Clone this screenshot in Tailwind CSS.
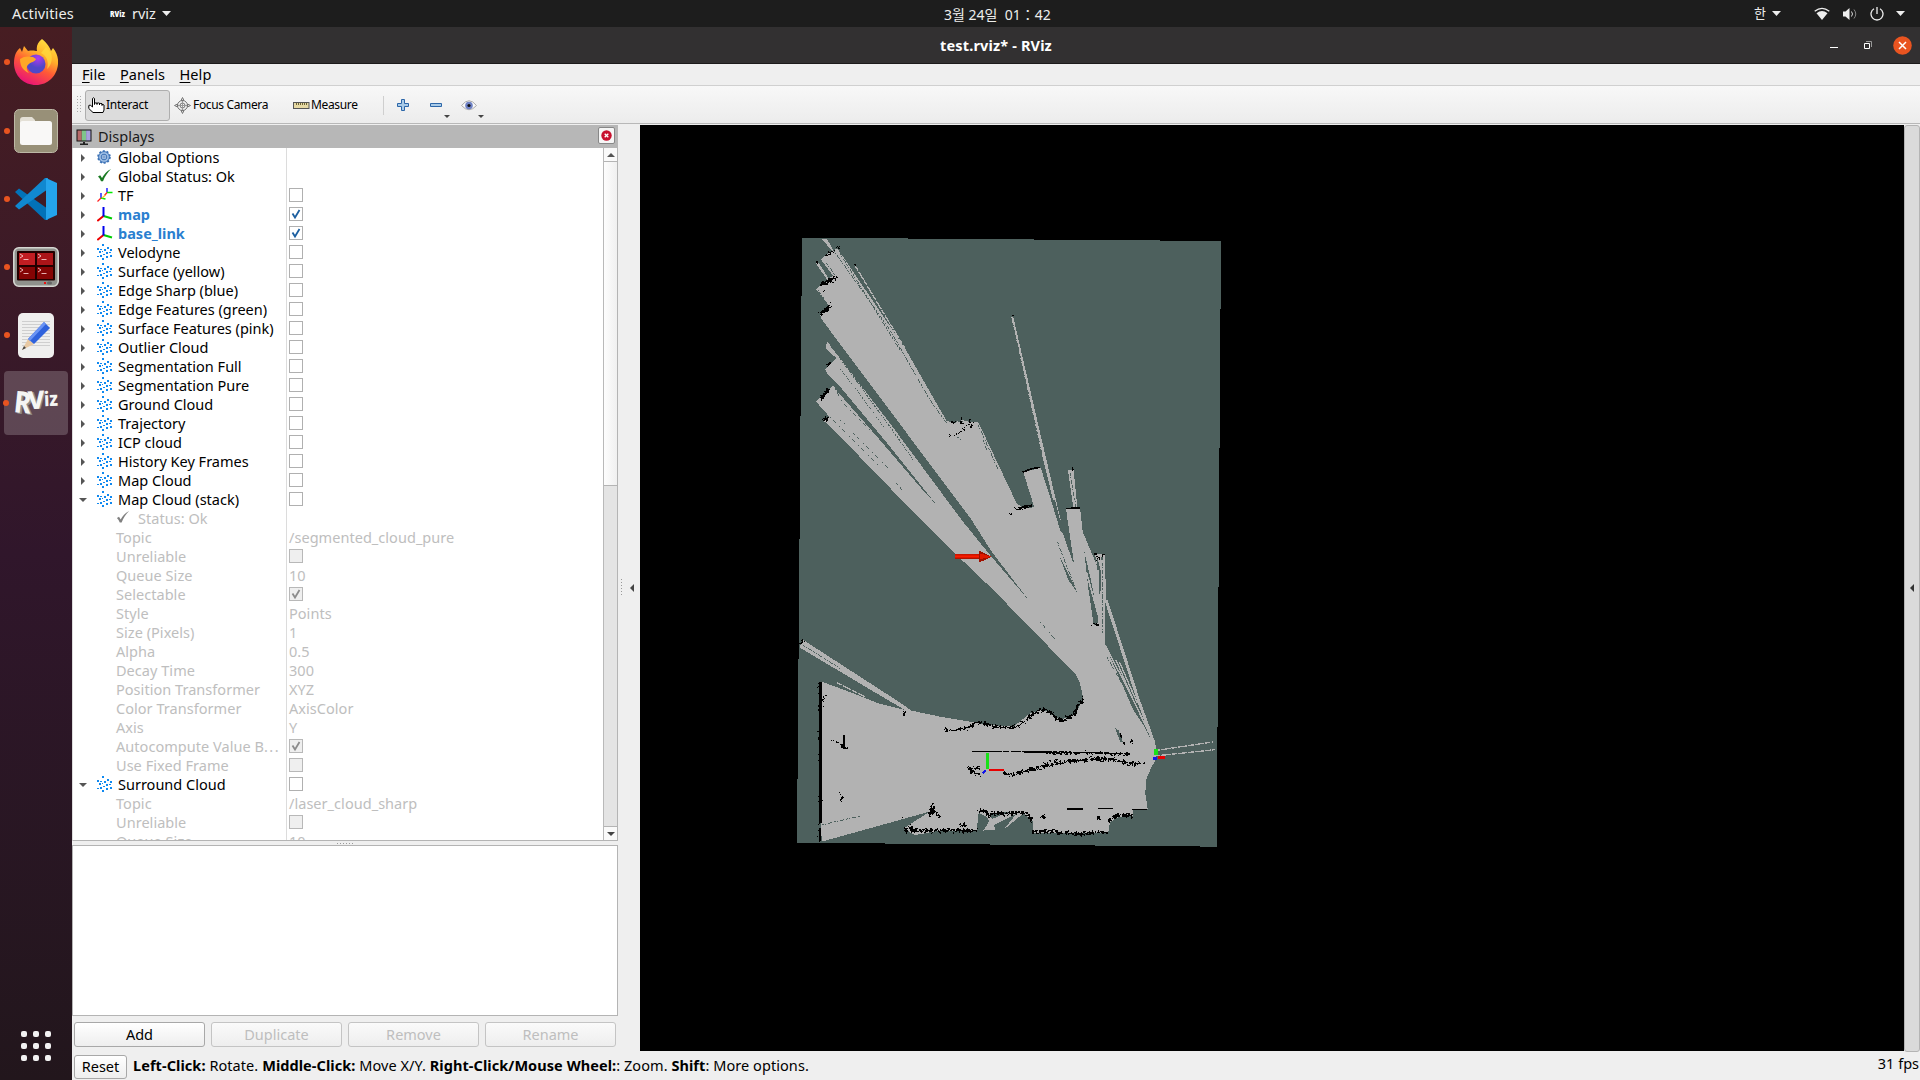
<!DOCTYPE html>
<html lang="en">
<head>
<meta charset="utf-8">
<title>test.rviz* - RViz</title>
<script src="https://cdn.jsdelivr.net/npm/@tailwindcss/browser@4"></script>
</head>
<body class="w-[1920px] h-[1080px] overflow-hidden flex flex-col bg-[#efefef] font-['Noto_Sans','Noto_Sans_CJK_KR',sans-serif] text-[14.5px] text-black">
<svg class="hidden">
  <symbol id="cloud" viewBox="0 0 16 16"><path fill="#1089f0" shape-rendering="crispEdges" d="M5 0h2v2H5zM10 3h2v2h-2zM0 4h2v2H0zM3 5h2v1H3zM7 5h2v2H7zM13 5h2v2h-2zM2 7h2v2H2zM5 7h1v1H5zM9 8h2v2H9zM12 8h2v1h-2zM3 11h2v2H3zM6 10h2v1H6zM0 12h2v1H0zM9 12h2v2H9zM13 11h2v2h-2zM5 14h2v2H5z"/></symbol>
  <symbol id="gear" viewBox="0 0 16 16"><circle cx="7" cy="8" r="5.400" fill="#9dbde4" stroke="#3f75b8" stroke-width="1"/><circle cx="7" cy="8" r="6" fill="none" stroke="#3a70b5" stroke-width="1.600" stroke-dasharray="2 1.770"/><circle cx="7" cy="8" r="2.800" fill="#b8d0ee" stroke="#2f66ad" stroke-width=".9"/><circle cx="7" cy="8" r="1.100" fill="#eef4fc" stroke="#2f66ad" stroke-width=".7"/></symbol>
  <symbol id="check" viewBox="0 0 16 16"><path d="M1 8.500 L3.200 7.200 L5 10 C7 6.500 9.500 3.200 14 1 C10.500 4.500 7.800 8.500 6 13.200 L4 13.200 C3.300 11.300 2.300 9.700 1 8.500z"/></symbol>
  <symbol id="tf" viewBox="0 0 16 16"><g fill="none" stroke-width="1.300"><path stroke="#00f" d="M10 1V5.500M4 6v5"/><path stroke="#0e0" d="M10 5.500h5.500M4 11l4.500 1"/><path stroke="#f22" d="M10 5.500l-2.500 3M4 11L.5 14.500"/><path stroke="#fb3" d="M8.500 8l-3.500 3"/></g></symbol>
  <symbol id="axes" viewBox="0 0 16 16"><g fill="none" stroke-width="2"><path stroke="#0c0" d="M6.500 10l8.500 2.500"/><path stroke="#e00" d="M6.500 10L.3 15"/><path stroke="#00e" d="M6.500 10.500V1"/></g></symbol>
</svg>

<header class="h-[27px] shrink-0 bg-[#1d1d1d] text-[#eeeeec] flex items-center">
  <div class="w-[940px] flex items-center pl-3">
    <span class="w-[98px] tracking-[0.150px]">Activities</span>
    <svg class="w-[15px] h-[14px] overflow-visible" viewBox="0 0 15 14"><text x="0" y="10" font-size="9.500" font-weight="900" fill="#fff" textLength="15" lengthAdjust="spacingAndGlyphs" font-family="Noto Sans">RViz</text></svg>
    <span class="ml-[7px]">rviz</span>
    <svg class="ml-[6px] w-[9px] h-[5px]" viewBox="0 0 9 5"><path fill="#eee" d="M0 0h9L4.500 5z"/></svg>
  </div>
  <div class="w-[120px] ml-[4px] whitespace-pre text-[14px] pt-[2px]">3월 24일  01：42</div>
  <div class="flex-1 flex items-center justify-end pr-[15px]">
    <span class="text-[13px] pt-px">한</span>
    <svg class="ml-[6px] w-[9px] h-[5px]" viewBox="0 0 9 5"><path fill="#eee" d="M0 0h9L4.500 5z"/></svg>
    <svg class="ml-[33px] w-4 h-3.5" viewBox="0 0 16 14"><path fill="#eee" d="M8 13L2.500 6.200Q8 2 13.500 6.200z"/><path fill="none" stroke="#eee" stroke-width="1.300" d="M.7 4.300Q8 -1.600 15.300 4.300"/></svg>
    <svg class="ml-[12px] w-4 h-3.5" viewBox="0 0 16 14"><path fill="#eee" d="M1 4.500h2.500L7.500 1v12L3.500 9.500H1z"/><path fill="none" stroke="#ddd" d="M9.500 4.500q2 2.500 0 5"/><path fill="none" stroke="#888" d="M12 2.500q3.500 4.500 0 9"/></svg>
    <svg class="ml-[12px] w-3.5 h-3.5" viewBox="0 0 14 14"><path fill="none" stroke="#eee" stroke-width="1.300" d="M7 0v7M4 1.800a6 6 0 1 0 6 0"/></svg>
    <svg class="ml-[12px] w-[9px] h-[5px]" viewBox="0 0 9 5"><path fill="#eee" d="M0 0h9L4.500 5z"/></svg>
  </div>
</header>

<div class="flex flex-1 min-h-0">
  <nav class="w-[72px] shrink-0 flex flex-col bg-linear-to-b from-[#471d22] via-[#30162b] to-[#22161c]">
    <div class="h-[70px] flex items-center">
      <i class="w-1.5 h-1.5 rounded-full bg-[#e95420] ml-1"></i>
      <svg class="ml-1 w-11 h-[46px]" viewBox="0 0 44 46">
        <defs><linearGradient id="ff" x1=".8" y1="0" x2=".3" y2="1"><stop offset="0" stop-color="#ffe843"/><stop offset=".35" stop-color="#ffb02a"/><stop offset=".6" stop-color="#ff5b35"/><stop offset="1" stop-color="#e8107a"/></linearGradient><radialGradient id="fp" cx=".6" cy=".2"><stop offset="0" stop-color="#b03af0"/><stop offset="1" stop-color="#5048c8"/></radialGradient></defs>
        <path fill="url(#ff)" d="M28 0C34 5 36 9 37 12L39 9C43 14 44.500 19 44 25C43 37 34 46 22 46C10 46 0 37 0 24C0 17 2 12 6 9L8 13L10 7L14 12C19 11 21 12 23 12C22 7 24 3 28 0z"/>
        <circle cx="22" cy="25" r="9.500" fill="url(#fp)"/>
        <path fill="#ffa727" d="M6 20C10 17 14 17 19 18L22 20C21 23 17 23 15 25C12 27 12 31 15 34C10 32 6 28 6 20z"/>
        <path fill="#ffdc3e" d="M27 14c6 3 8 9 6 16c4-3 6-10 4-16l-5-6z" opacity=".7"/>
      </svg>
    </div>
    <div class="h-[68px] flex items-center">
      <i class="w-1.5 h-1.5 rounded-full bg-[#e95420] ml-1"></i>
      <svg class="ml-1 w-11 h-11" viewBox="0 0 44 44"><rect x=".5" y=".5" width="43" height="43" rx="5" fill="#989078" stroke="#bdb8a6"/><path fill="#e4e0d6" d="M6 11a3 3 0 0 1 3-3h9l3 3v7H6z"/><rect x="6" y="12" width="32" height="24" rx="2.500" fill="#f9f8f7"/></svg>
    </div>
    <div class="h-[68px] flex items-center">
      <i class="w-1.5 h-1.5 rounded-full bg-[#e95420] ml-1"></i>
      <svg class="ml-[5px] w-[42px] h-[42px]" viewBox="0 0 42 42"><path fill="#0272b8" d="M0 14L4 10.500L33 31V42L30 42z"/><path fill="#1088d0" d="M0 28L4 31.500L33 11V0H30z"/><path fill="#24a4ec" d="M31 0L42 5V37L31 42z"/></svg>
    </div>
    <div class="h-[68px] flex items-center">
      <i class="w-1.5 h-1.5 rounded-full bg-[#e95420] ml-1"></i>
      <svg class="ml-[3px] w-[46px] h-10" viewBox="0 0 46 40"><rect x=".8" y=".8" width="44.400" height="38.400" rx="5" fill="#8f918c" stroke="#d5d7d2" stroke-width="1.600"/><rect x="4" y="4" width="38" height="29.500" rx="1" fill="#200"/><rect x="6" y="6" width="16" height="12" fill="#c11d22"/><rect x="24" y="6" width="16" height="12" fill="#ab1418"/><rect x="6" y="20" width="16" height="12" fill="#850404"/><rect x="24" y="20" width="16" height="12" fill="#850404"/><path stroke="#fdd" stroke-width=".8" fill="none" d="M7 7l3 2-3 2M10.500 12.500h5M25 7l3 2-3 2M28.500 12.500h5M7 21l3 2-3 2M10.500 26.500h5M25 21l3 2-3 2M28.500 26.500h5"/><path fill="#e11" d="M31 35h2v2h-2z"/><rect x="34" y="34.500" width="5" height="3" rx="1.500" fill="#666"/></svg>
    </div>
    <div class="h-[68px] flex items-center">
      <i class="w-1.5 h-1.5 rounded-full bg-[#e95420] ml-1"></i>
      <svg class="ml-2 w-9 h-[45px]" viewBox="0 0 36 45"><rect width="36" height="45" rx="5" fill="#efefee"/><path stroke="#cfcfcf" d="M4 8.500h28M4 11.500h28M4 14.500h28M4 17.500h28M4 20.500h28M4 23.500h28M4 26.500h28M4 29.500h28M4 32.500h28"/><path fill="#e8c9a4" d="M4 37L10 26L16 31z"/><path fill="#444" d="M4 37l2-4 2 2z"/><path fill="#2f62dc" d="M10 26L26 9L32 15L16 31z"/><path fill="#6a94f4" d="M10 26L26 9L28 11L12 28z"/></svg>
    </div>
    <div class="h-[68px] flex items-center">
      <div class="ml-1 w-16 h-16 rounded bg-white/20 flex items-center">
        <i class="w-1.5 h-1.5 rounded-full bg-[#e95420] -ml-px"></i>
        <svg class="ml-[5px] w-[46px] h-[34px] overflow-visible" viewBox="0 0 46 34" font-family="Noto Sans" font-weight="800"><g fill="#8c8a86"><text x="2" y="28" font-size="30" textLength="17" lengthAdjust="spacingAndGlyphs" transform="rotate(6 9 20)">R</text><text x="16" y="23" font-size="24" transform="rotate(-3 20 20)">V</text></g><g fill="#f5f5f3"><text x="0" y="27" font-size="30" textLength="17" lengthAdjust="spacingAndGlyphs" transform="rotate(6 9 20)">R</text><text x="14" y="23" font-size="25" transform="rotate(-3 20 20)">V</text><text x="30" y="20" font-size="20" textLength="14" lengthAdjust="spacingAndGlyphs" transform="rotate(-2 36 14)">iz</text></g></svg>
      </div>
    </div>
    <div class="mt-auto mb-[19px] mx-auto grid grid-cols-3 gap-[6px]">
      <i class="w-1.5 h-1.5 rounded-[2px] bg-[#f2f2f2]"></i><i class="w-1.5 h-1.5 rounded-[2px] bg-[#f2f2f2]"></i><i class="w-1.5 h-1.5 rounded-[2px] bg-[#f2f2f2]"></i>
      <i class="w-1.5 h-1.5 rounded-[2px] bg-[#f2f2f2]"></i><i class="w-1.5 h-1.5 rounded-[2px] bg-[#f2f2f2]"></i><i class="w-1.5 h-1.5 rounded-[2px] bg-[#f2f2f2]"></i>
      <i class="w-1.5 h-1.5 rounded-[2px] bg-[#f2f2f2]"></i><i class="w-1.5 h-1.5 rounded-[2px] bg-[#f2f2f2]"></i><i class="w-1.5 h-1.5 rounded-[2px] bg-[#f2f2f2]"></i>
    </div>
  </nav>

  <main class="flex-1 min-w-0 flex flex-col">
    <div class="h-[37px] shrink-0 bg-[#323031] border-b border-[#1c1b1b] flex items-center text-white">
      <b class="w-[1848px] text-center tracking-[0.150px] pt-px">test.rviz* - RViz</b>
      <div class="-ml-[104px] w-[104px] flex items-center justify-end pr-[8px]">
        <svg class="w-2 h-3" viewBox="0 0 8 12"><path fill="#fff" d="M0 8h8v1H0z"/></svg>
        <svg class="ml-[26px] w-2 h-2.5" viewBox="0 0 8 10"><path fill="none" stroke="#999" d="M2 1.500h5.500V7"/><path fill="none" stroke="#fff" d="M.5 3.500h5v5h-5z"/></svg>
        <svg class="ml-[21px] w-[19px] h-[19px]" viewBox="0 0 19 19"><circle cx="9.500" cy="9.500" r="9.300" fill="#e95420"/><path stroke="#fff" stroke-width="1.500" d="M6 6l7 7M13 6l-7 7"/></svg>
      </div>
    </div>
    <div class="h-[22px] shrink-0 border-b border-[#d0d0d0] flex items-center pl-[10px] gap-[14.5px] tracking-[0.060px]">
      <span><u class="underline-offset-2">F</u>ile</span><span><u class="underline-offset-2">P</u>anels</span><span><u class="underline-offset-2">H</u>elp</span>
    </div>
    <div class="h-[38px] shrink-0 border-b border-[#b8b8b8] bg-linear-to-b from-[#f8f8f8] to-[#ececec] flex items-center text-[12px] tracking-[-0.350px] pt-px">
      <svg class="ml-[5px] w-[5px] h-[18px]" viewBox="0 0 5 18"><path stroke="#aaa" stroke-dasharray="1 2" d="M.5 0v18M3.500 0v18"/></svg>
      <div class="ml-[3px] w-[85px] h-[31px] rounded-[3px] border border-[#aeaeae] bg-[#dcdcdc] flex items-center pl-[2px]">
        <svg class="w-[17px] h-[17px]" viewBox="0 0 17 17"><path fill="#fff" stroke="#000" stroke-width="1" d="M4.500 10V1.500q1-1.500 2 0V7.500V6.200q1.500-.6 2.500 0V7.500V6.200q1.500-.6 2.500 0V8V6.700q1.500-.6 2.500 0V8.500V7.500q1.500-.2 2 .5V13l-1 2.500H5L.8 11.500V8.500q1.500-.8 2 0z"/></svg>
        <span class="ml-[1px] tracking-[-0.250px]">Interact</span>
      </div>
      <svg class="ml-[4px] w-[17px] h-[17px]" viewBox="0 0 17 17"><g fill="none" stroke="#777"><circle cx="8.500" cy="8.500" r="5"/><circle cx="8.500" cy="8.500" r="2.500"/><path stroke="#999" d="M8.500 3v11M3 8.500h11"/><path fill="#ddd" d="M8.500.5l1.500 3H7zM8.500 16.500l1.500-3H7zM.5 8.500l3-1.500v3zM16.500 8.500l-3-1.500v3z"/></g></svg>
      <span class="ml-[2px] w-[100px]">Focus Camera</span>
      <svg class="w-[17px] h-[7px]" viewBox="0 0 17 7"><rect x=".5" y=".5" width="15.500" height="6" fill="#e6d9a4" stroke="#555"/><path stroke="#6b6235" d="M3.500 1v2M5.500 1v2M7.500 1v2M9.500 1v2M11.500 1v2M13.500 1v2"/></svg>
      <span class="ml-[1px] w-[72px]">Measure</span>
      <i class="w-px h-[19px] bg-[#cfcfcf]"></i>
      <svg class="ml-[13px] w-3 h-3" viewBox="0 0 12 12"><path fill="#a9cbe8" stroke="#2c66a8" d="M4.500.5h3v4h4v3h-4v4h-3v-4h-4v-3h4z"/></svg>
      <svg class="ml-[21px] w-3 h-1" viewBox="0 0 12 4"><path fill="#a9cbe8" stroke="#2c66a8" d="M.5.5h11v3H.5z"/></svg>
      <svg class="ml-[2px] mt-[22px] w-[6px] h-[3px]" viewBox="0 0 6 3"><path fill="#444" d="M0 0h6L3 3z"/></svg>
      <svg class="ml-[11px] w-4 h-[11px]" viewBox="0 0 16 11"><path fill="#fafafa" stroke="#aaa" d="M.5 5.500Q8-4 15.500 5.500Q8 14 .5 5.500z"/><circle cx="8" cy="5.500" r="3.800" fill="#6f82c4"/><circle cx="8" cy="5.500" r="1.600" fill="#111"/></svg>
      <svg class="ml-px mt-[22px] w-[6px] h-[3px]" viewBox="0 0 6 3"><path fill="#444" d="M0 0h6L3 3z"/></svg>
    </div>

    <div class="flex h-[928px] shrink-0 pt-px">
      <section class="w-[546px] shrink-0 flex flex-col">
        <div class="h-[23px] shrink-0 bg-[#b7b7b7] flex items-center pl-1 pr-[3px] text-[#1a1a1a]">
          <svg class="w-4 h-4" viewBox="0 0 16 16"><rect x=".5" y=".5" width="15" height="12" fill="#111" /><path fill="#b86a6a" d="M1.500 1.500h4.300v10H1.500z"/><path fill="#7fc58a" d="M5.800 1.500h4.300v10H5.800z"/><path fill="#a8a0dc" d="M10.100 1.500h4.400v10h-4.400z"/><path fill="#222" d="M7 13h2v1.500h3V16H4v-1.500h3z"/></svg>
          <span class="ml-[6px]">Displays</span>
          <span class="ml-auto w-[17px] h-[17px] mb-[3px] rounded-[2px] border border-[#888] bg-[#f6f6f6] flex items-center justify-center"><svg class="w-[11px] h-[11px]" viewBox="0 0 11 11"><circle cx="5.500" cy="5.500" r="5.200" fill="#c8102e"/><path stroke="#fff" stroke-width="1.300" d="M3.700 3.700l3.600 3.600M7.300 3.700l-3.600 3.600"/></svg></span>
        </div>
        <div class="h-[693px] shrink-0 flex bg-white border-b border-r border-l border-[#b4b4b4] border-l-[#ddd] overflow-hidden">
          <div id="tree" class="flex-1 h-[692px] overflow-hidden"></div>
          <div class="w-[14px] border-l border-[#b9b9b9] bg-[#e4e4e4] flex flex-col">
            <span class="h-[14px] bg-[#fafafa] border-b border-[#b4b4b4] flex items-center justify-center"><svg class="w-2 h-1" viewBox="0 0 8 4"><path fill="#555" d="M0 4L4 0l4 4z"/></svg></span>
            <span class="h-[324px] bg-linear-to-r from-[#fdfdfd] to-[#f0f0f0] border-b border-[#b4b4b4]"></span>
            <span class="mt-auto h-[14px] bg-[#fafafa] border-t border-[#b4b4b4] flex items-center justify-center"><svg class="w-2 h-1" viewBox="0 0 8 4"><path fill="#444" d="M0 0h8L4 4z"/></svg></span>
          </div>
        </div>
        <div class="h-1 flex items-center justify-center"><svg class="w-[17px] h-px" viewBox="0 0 17 1"><path stroke="#999" stroke-dasharray="1 2" d="M0 .5h17"/></svg></div>
        <div class="h-[171px] shrink-0 bg-white border border-[#b4b4b4]"></div>
        <div class="flex gap-[6px] pt-[6px] px-[2px] text-[#bebebe]">
          <button class="w-[131px] h-[25px] rounded-[3px] border border-[#a8a8a8] bg-linear-to-b from-white to-[#eeeeee] text-black">Add</button>
          <button class="w-[131px] h-[25px] rounded-[3px] border border-[#c4c4c4] bg-linear-to-b from-[#fafafa] to-[#eeeeee]">Duplicate</button>
          <button class="w-[131px] h-[25px] rounded-[3px] border border-[#c4c4c4] bg-linear-to-b from-[#fafafa] to-[#eeeeee]">Remove</button>
          <button class="w-[131px] h-[25px] rounded-[3px] border border-[#c4c4c4] bg-linear-to-b from-[#fafafa] to-[#eeeeee]">Rename</button>
        </div>
      </section>
      <div class="w-[22px] shrink-0 flex items-center pl-[3px] pb-[2px]">
        <svg class="w-px h-[17px]" viewBox="0 0 1 17"><path stroke="#999" stroke-dasharray="1 2" d="M.5 0v17"/></svg>
        <svg class="ml-[8px] w-1 h-2" viewBox="0 0 4 8"><path fill="#444" d="M4 0v8L0 4z"/></svg>
      </div>
      <svg class="w-[1264px] h-[926px] shrink-0 bg-black" viewBox="640 125 1264 926" shape-rendering="crispEdges">
        <defs>
          <filter id="rough" x="-.1" y="-.1" width="1.200" height="1.200"><feTurbulence type="fractalNoise" baseFrequency=".13" numOctaves="2" seed="4"/><feDisplacementMap in="SourceGraphic" scale="20" xChannelSelector="R" yChannelSelector="G"/></filter>
          <linearGradient id="shaft" x1="0" y1="0" x2="0" y2="1"><stop offset="0" stop-color="#c01400"/><stop offset=".5" stop-color="#ff1c00"/><stop offset="1" stop-color="#8a0e00"/></linearGradient>
        </defs>
        <g transform="translate(790 220) scale(.333333)">
          <path fill="#4d605d" d="M36 53L1293 63L1280 1880L21 1868z"/>
          <!-- free space -->
          <g fill="#b2b2b2">
            <path d="M97 58L112 58L130 92L142 85L345 385L470 603L490 608L518 600L545 607L565 607L680 850L700 865L733 862L700 757L752 743L790 862L815 930L850 1030L828 865L870 862L878 935L920 1035L915 1000L945 1005L948 1140L1000 1310L1047 1440L1098 1580L1096 1622L1085 1640L1068 1680L1066 1720L1073 1768L1030 1768V1788L985 1792L960 1806L955 1838H730V1805L700 1780L640 1776L600 1780L616 1830L580 1830L600 1810L590 1790L566 1778L560 1832H450L375 1845L340 1826L415 1776L95 1865L90 1690L95 1385L190 1420L265 1450L345 1470L290 1438L95 1322L28 1282L40 1260L315 1438L365 1472L450 1490L540 1505L600 1515L670 1520L720 1480L760 1468L810 1500L855 1485L880 1435L870 1390L855 1360L815 1320L610 1110L500 1005L335 840L110 608L100 603L118 590L78 545L130 495L105 448L140 415L106 385L112 365L300 610L515 900L600 1005L718 1143L605 995L545 900L95 298L90 285L118 258L78 207L112 180L76 128L84 126L116 175L130 168L92 118L125 92z"/>
            <path d="M834 750L851 750L862 862L850 862z"/>
            <path d="M664 292L670 292L760 680L812 900L804 900L750 680z"/>
            <path d="M692 1774L580 1832L600 1800L650 1778zM700 1780L640 1830L680 1780z"/>
          </g>
          <!-- unknown gaps between rays -->
          <g fill="#4d605d">
            <path d="M105 455L150 500L300 680L440 855L400 812L280 672L140 512z"/>
            <path d="M783 840L795 840L822 945L812 935zM804 840L828 868L852 1030L846 1010L826 925z"/>
            <path d="M883 995L905 1090L925 1190L922 1215H911L895 1105zM921 1010L934 1060L931 1125L925 1120zM934 1010L938 1010L936 1090z"/>
            <path d="M945 1160L948 1140L1060 1480L1090 1560L1030 1470L945 1275z"/>
            <path d="M976 1525L985 1530L1000 1568L990 1565zM805 1000L830 1050L862 1118L835 1080z" />
            <path d="M380 1790L415 1778L345 1822z"/>
          </g>
          <g stroke="#b2b2b2" fill="none">
            <path stroke-width="9" d="M948 1140L1000 1300L1045 1440L1092 1570"/>
            <path stroke-width="4" d="M945 1275L1010 1400L1088 1560M978 1320L1030 1440L1088 1560M988 1325L1042 1450"/>
            <path stroke-width="5" d="M890 1060L925 1185M936 1020V1200M925 1050V1180"/>
            <path stroke-width="4" stroke-dasharray="16 4 28 3" d="M140 1388L225 1430M196 138L260 245L345 385M1094 1592L1268 1566M1094 1608L1275 1589"/>
          </g>
          <!-- ragged scan lines -->
          <g stroke="#4d605d" stroke-width="3" fill="none" stroke-dasharray="7 4 3 5 14 4">
            <path d="M130 90L300 330L420 540L470 610M150 100L330 390M110 130L135 165M565 615L625 750M125 375L240 520L380 710"/>
            <path d="M120 375L260 565L370 720M135 385L240 540L330 660M145 440L200 510L280 620M85 210L110 250" stroke-dasharray="3 5 6 4"/>
            <path d="M120 590L265 735M135 505L160 550L240 630M190 640L300 750M320 790L345 820M150 600L165 612M230 600L330 725M750 1205L800 1265" stroke-dasharray="5 9 12 14"/>
            <path d="M802 965L860 1115M668 310L755 700M840 760L858 860M38 1275L150 1345M937 1030V1240"/>
            <path d="M95 1815L210 1788M950 1310L1025 1440L1080 1550M485 608L530 602M500 650L512 658M580 660L590 690"/>
          </g>
          <!-- obstacles -->
          <g stroke="#000" fill="none">
            <path stroke-width="8" d="M92 1385V1740M92 1740V1808M90 1825V1862"/>
            <path stroke-width="4" d="M162 1545V1580"/>
            <path stroke-width="4" stroke-dasharray="90 3 20 6 30 3" d="M545 1594L850 1597L1020 1601M830 1767H880M925 1766H970M1025 1768H1072"/>
          </g>
          <g stroke="#000" fill="none" filter="url(#rough)">
            <path stroke-width="6" stroke-dasharray="20 14" d="M90 1385V1862M103 1425V1460"/>
            <path stroke-width="4" d="M120 1555L160 1578M150 1720L155 1745"/>
            <path stroke-width="10" d="M155 1582H170M150 1735H158M338 1478H348"/>
            <path stroke-width="10" d="M92 193L120 182L138 170M90 282L105 272L120 258M92 538L105 522L116 508M102 602L112 592"/>
            <path stroke-width="6" d="M105 108L130 94M108 440L122 428M76 128L82 126M142 86L146 80"/>
            <path stroke-width="3" stroke-dasharray="4 5" d="M110 246L138 250M100 212H116M196 136V142"/>
            <path stroke-width="4" stroke-dasharray="9 4 4 6" d="M478 650L520 632L560 610M480 607H500M505 640L530 615L548 600M515 590V615M540 600V620"/>
            <path stroke-width="9" d="M513 610H523"/>
            <path stroke-width="4" d="M664 290L668 284M660 883L664 880M845 748H850"/>
            <path stroke-width="9" d="M677 868L700 862L727 856"/>
            <path stroke-width="5" d="M910 1215H927M915 998L922 1015M936 1006L944 1006M920 1016H930M32 1272L40 1262"/>
            <path stroke-width="7" d="M462 1527L490 1532L520 1525L545 1520L552 1510L580 1508L600 1518L640 1522L675 1522L700 1508L730 1480L760 1468L780 1476L800 1496L820 1502L850 1486L862 1460L880 1440V1430"/>
            <path stroke-width="5" stroke-dasharray="60 6 40 10" d="M770 1598L1020 1602"/>
            <path stroke-width="8" stroke-dasharray="22 3 12 3" d="M640 1660L670 1664L700 1655L740 1644L800 1630L850 1622L900 1620L970 1618L1000 1628L1062 1632"/>
            <path stroke-width="4" stroke-dasharray="12 6" d="M1000 1618L1020 1640L1060 1630M760 1628L800 1622M900 1614H960"/>
            <path stroke-width="8" d="M535 1645L550 1658L570 1665M540 1645L570 1643"/>
            <path stroke-width="7" d="M418 1790L425 1760L448 1792M420 1775L432 1780M510 1812L530 1815M565 1775L585 1772L598 1790M335 1790L340 1793"/>
            <path stroke-width="9" stroke-dasharray="14 3 26 4" d="M340 1832L390 1830L460 1833L560 1831M600 1782L700 1778L715 1785L728 1808M730 1836L800 1836L860 1840L955 1838M957 1805L975 1788L1030 1785"/>
            <path stroke-width="12" d="M752 1790H765M920 1793H930M996 1570H1004M1022 1562H1025M990 1545H996M360 1820L370 1832"/>
          </g>
          <path stroke="#000" stroke-width="5" fill="none" d="M698 757L725 746L750 742M828 866L870 863"/>
          <!-- frame axes -->
          <path fill="#19e019" d="M588 1600h8v48h-8zM1092 1588h12v18h-12z"/>
          <path fill="#e80000" d="M596 1646h46v7h-46zM1104 1607h20v10h-20z"/>
          <path fill="#1414e8" d="M575 1657l12-8v8l-8 5zM1090 1610h12v10h-12z"/>
          <!-- pose arrow -->
          <path fill="url(#shaft)" d="M495 1002h72v16h-72z"/>
          <path fill="#a01000" d="M567 992L605 1010L567 1028z"/><path fill="#e01800" d="M569 1000L605 1010L569 1018z"/>
        </g>
      </svg>
      <div class="w-4 bg-[#dadada] border border-[#b4b4b4] rounded-[3px] flex items-center pl-[5px] pb-[1px]"><svg class="w-1 h-2" viewBox="0 0 4 8"><path fill="#333" d="M4 0v8L0 4z"/></svg></div>
    </div>

    <footer class="flex-1 flex items-center pl-[2px] pr-px">
      <button class="w-[53px] h-6 mt-[2px] rounded-[3px] border border-[#a8a8a8] bg-linear-to-b from-white to-[#eeeeee]">Reset</button>
      <p class="ml-[6px] tracking-[0.065px]"><b>Left-Click:</b> Rotate. <b>Middle-Click:</b> Move X/Y. <b>Right-Click/Mouse Wheel:</b>: Zoom. <b>Shift</b>: More options.</p>
      <span class="ml-auto mb-1">31 fps</span>
    </footer>
  </main>
</div>

<script>
// kind, label, value ('off' / 'on' draw a checkbox)
const rows = [
  ['gear','Global Options',''],['check','Global Status: Ok',''],['tf','TF','off'],['axes','map','on'],['axes','base_link','on'],
  ['cloud','Velodyne','off'],['cloud','Surface (yellow)','off'],['cloud','Edge Sharp (blue)','off'],['cloud','Edge Features (green)','off'],
  ['cloud','Surface Features (pink)','off'],['cloud','Outlier Cloud','off'],['cloud','Segmentation Full','off'],['cloud','Segmentation Pure','off'],
  ['cloud','Ground Cloud','off'],['cloud','Trajectory','off'],['cloud','ICP cloud','off'],['cloud','History Key Frames','off'],['cloud','Map Cloud','off'],
  ['cloud','Map Cloud (stack)','off','open'],
  ['status','Status: Ok',''],['prop','Topic','/segmented_cloud_pure'],['prop','Unreliable','off'],['prop','Queue Size','10'],['prop','Selectable','on'],
  ['prop','Style','Points'],['prop','Size (Pixels)','1'],['prop','Alpha','0.5'],['prop','Decay Time','300'],['prop','Position Transformer','XYZ'],
  ['prop','Color Transformer','AxisColor'],['prop','Axis','Y'],['prop','Autocompute Value B<span class="tracking-[1.500px]">...</span>','on'],['prop','Use Fixed Frame','off'],
  ['cloud','Surround Cloud','off','open'],['prop','Topic','/laser_cloud_sharp'],['prop','Unreliable','off'],['prop','Queue Size','10']
];
const box = (on, dim) => `<span class="w-[14px] h-[14px] mb-px border ${dim ? 'border-[#b8b8b8] bg-[#efefef] text-[#8c8c8c]' : 'border-[#b0b0b0] bg-white text-[#1c5fa0]'}">${on ? '<svg class="w-3 h-3" viewBox="0 0 12 12"><path fill="none" stroke="currentColor" stroke-width="1.800" d="M2.500 5.500L5 9.500L9.500 2"/></svg>' : ''}</span>`;
document.getElementById('tree').innerHTML = rows.map(([kind, label, value, open]) => {
  const dim = kind === 'prop' || kind === 'status';
  const arrow = open
    ? '<svg class="ml-[6px] w-2 h-2" viewBox="0 0 8 8"><path fill="#555" d="M0 2h8L4 6z"/></svg>'
    : '<svg class="ml-[6px] w-2 h-2" viewBox="0 0 8 8"><path fill="#555" d="M2 0v8L6 4z"/></svg>';
  let left;
  if (kind === 'prop') left = `<span class="ml-[43px]">${label}</span>`;
  else if (kind === 'status') left = `<svg class="ml-[43px] mb-[2px] w-[15px] h-[15px] fill-[#808080]"><use href="#check"/></svg><span class="ml-[7px]">${label}</span>`;
  else left = `${arrow}<svg class="ml-[10px] mb-[2px] w-4 h-4 fill-[#1a7a22]"><use href="#${kind}"/></svg><span class="ml-[5px] ${kind === 'axes' ? 'font-bold text-[#2a7fd0]' : ''}">${label}</span>`;
  const right = value === 'on' || value === 'off' ? box(value === 'on', dim) : value;
  return `<div class="h-[19px] flex leading-[19px] whitespace-nowrap ${dim ? 'text-[#bebebe] tracking-[0.040px]' : ''}"><div class="w-[214px] flex items-center border-r border-[#dcdcdc]">${left}</div><div class="flex items-center pl-[2px]">${right}</div></div>`;
}).join('');
</script>
</body>
</html>
